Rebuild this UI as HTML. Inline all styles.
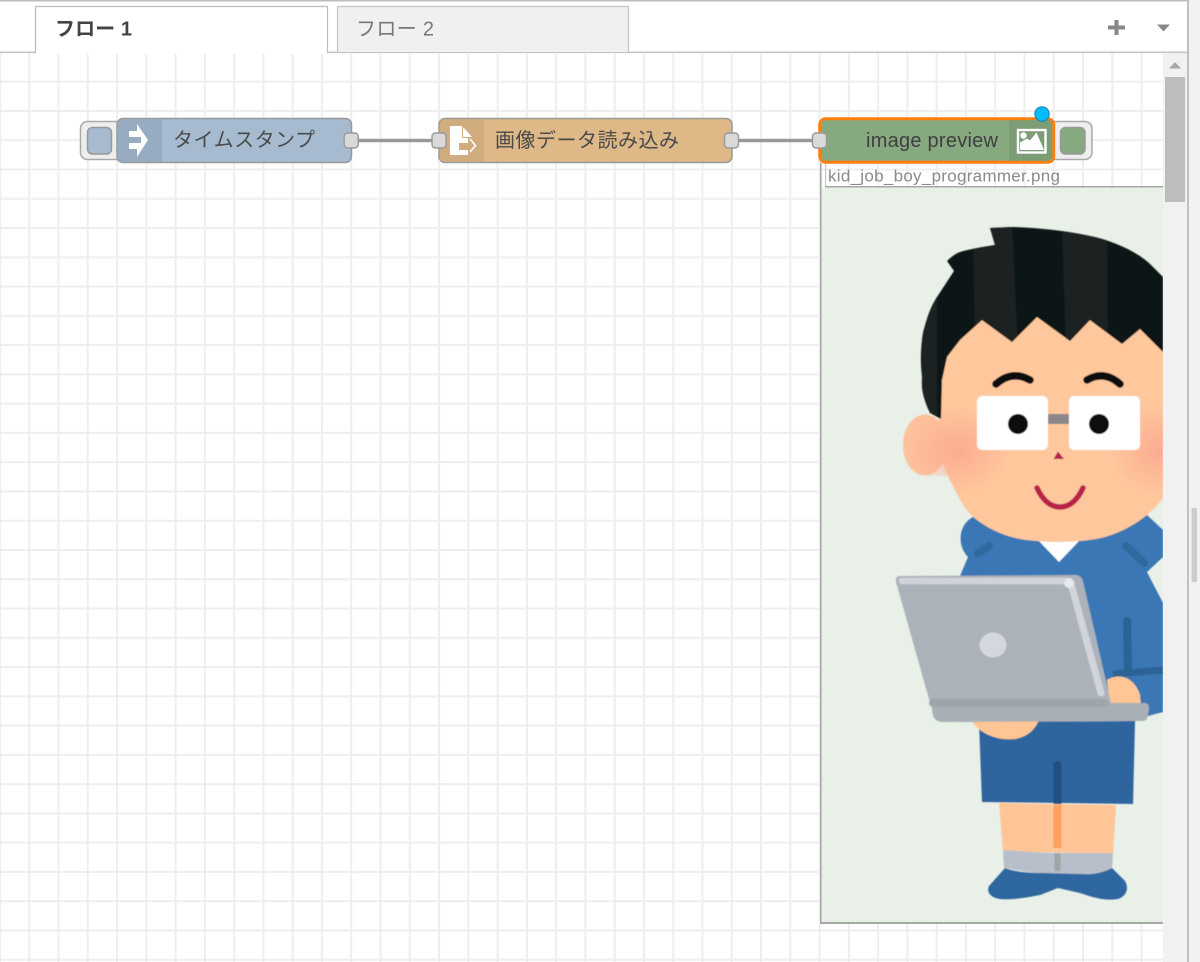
<!DOCTYPE html>
<html lang="ja">
<head>
<meta charset="utf-8">
<title>Node-RED flow</title>
<style>
html,body{margin:0;padding:0;width:1200px;height:962px;overflow:hidden;background:#fff}
svg{display:block}
text{font-family:"Liberation Sans","Noto Sans CJK JP",sans-serif}
</style>
</head>
<body>
<svg width="1200" height="962" viewBox="0 0 1200 962" xmlns="http://www.w3.org/2000/svg">
<defs>
<pattern id="grid" patternUnits="userSpaceOnUse" x="0" y="52.4" width="29.27" height="29.27">
<path d="M0 0V29.27M29.27 0V29.27M0 0H29.27M0 29.27H29.27" stroke="#eeeeee" stroke-width="2" fill="none"/>
</pattern>
<clipPath id="imgclip"><rect x="821" y="188" width="342" height="735"/></clipPath>
<clipPath id="hairclip"><path id="hairp" d="M990,228 L1013,227 C1040,228 1067,231 1090,236 C1110,240 1135,250 1150,264 L1163,277 L1163,352 L1140,329 L1122,344 L1090,320 L1070,341 L1037,317 L1012,342 L982,320 L960,340 L947,357 L942,380 L941,419 L930,413 C924,400 921,390 922,377 C920,360 921,345 923,333 C927,318 930,308 937,297 L954,271 L947,261 C951,257 955,254 960,252 C970,249 983,247 995,245 Z"/></clipPath>
<clipPath id="faceclip"><path d="M903,300 H1163 V520 L1147,515 L973,517 L947,476 H925 C910,476 903,460 903,445 Z"/></clipPath>
<radialGradient id="cheekL" cx="0.5" cy="0.5" r="0.5"><stop offset="0" stop-color="#fda991" stop-opacity="0.95"/><stop offset="1" stop-color="#fda991" stop-opacity="0"/></radialGradient>
<filter id="soft" x="-5%" y="-5%" width="110%" height="110%"><feGaussianBlur stdDeviation="0.5"/></filter>
</defs>

<!-- canvas -->
<rect x="0" y="52" width="1163" height="910" fill="#fff"/>
<rect x="0" y="53" width="1163" height="909" fill="url(#grid)"/>

<!-- tab bar -->
<rect x="0" y="0" width="1188" height="52" fill="#fff"/>
<rect x="0" y="0" width="1188" height="1.5" fill="#bdbdbd"/>
<rect x="0" y="51.5" width="1188" height="1.5" fill="#c4c4c4"/>
<path d="M35.5,53 V6.5 H327.5 V53" fill="#fff" stroke="#bdbdbd" stroke-width="1.2"/>
<rect x="36" y="51" width="291" height="3" fill="#fff"/>
<path d="M337.5,52 V6.5 H628.5 V52" fill="#f0f0f0" stroke="#c4c4c4" stroke-width="1.2"/>
<text x="55" y="35.5" font-size="20" font-weight="700" fill="#444" textLength="77" lengthAdjust="spacing">フロー 1</text>
<text x="356" y="35.5" font-size="20" fill="#777" textLength="78" lengthAdjust="spacing">フロー 2</text>
<path d="M1114.5,20 h4 v5.5 h6.5 v4 h-6.5 v5.5 h-4 v-5.5 h-6.5 v-4 h6.5 z" fill="#888"/>
<path d="M1157,24.5 H1170 L1163.5,31.5 Z" fill="#888"/>

<!-- right scrollbars -->
<rect x="1163" y="53" width="24" height="909" fill="#f1f1f1"/>
<rect x="1187" y="0" width="2" height="962" fill="#c0c0c0"/>
<rect x="1189" y="0" width="11" height="962" fill="#f2f2f2"/>
<path d="M1169,68.5 L1175,62 L1181,68.5 Z" fill="#a6a6a6"/>
<rect x="1165" y="77" width="20" height="125" fill="#bdbdbd"/>
<rect x="1191.5" y="508" width="5.5" height="74" fill="#cdcdcd"/>

<!-- preview image -->
<rect x="825" y="163" width="1.2" height="24" fill="#c8c8c8"/>
<rect x="825" y="186" width="338" height="1.6" fill="#a8a8a8"/>
<rect x="820" y="163" width="1.6" height="761" fill="#a0a8a0"/>
<rect x="820" y="922" width="343" height="2" fill="#a5a8a5"/>
<text x="828" y="181.5" font-size="17" fill="#8a8a8a" textLength="232" lengthAdjust="spacing">kid_job_boy_programmer.png</text>
<rect x="821.5" y="188" width="341.5" height="734" fill="#e8f0e8"/>

<g clip-path="url(#imgclip)">
<g filter="url(#soft)">
<!-- hoodie -->
<path d="M973,517 C958,525 957,546 968,557 L960,576 L960,722 L1148,716 L1163,712 L1163,603 L1147,572 L1163,557 L1163,530 L1147,515 Z" fill="#3b77b5"/>
<path d="M1038,540 L1080,540 L1059,562 Z" fill="#fff"/>
<path d="M978,553 L989,546" stroke="#2f6a9e" stroke-width="8" stroke-linecap="round"/>
<path d="M1126,546 L1144,563" stroke="#2f6a9e" stroke-width="8" stroke-linecap="round"/>
<path d="M1127,621 L1128,668" stroke="#2b6394" stroke-width="8" stroke-linecap="round"/>
<path d="M1113,674 L1163,670" stroke="#2b6394" stroke-width="7"/>

<!-- ear -->
<ellipse cx="925" cy="445" rx="22" ry="30.5" fill="#fdc29c"/>
<!-- face -->
<path d="M941,400 C937,430 938,455 947,473 C955,492 963,507 973,517 C990,531 1012,540 1037,541 C1060,543 1085,542 1105,537 C1122,532 1136,524 1147,515 C1155,508 1160,503 1163,498 L1163,300 L1000,290 L945,320 Z" fill="#fec79c"/>
<g clip-path="url(#faceclip)">
<ellipse cx="958" cy="450" rx="52" ry="44" fill="url(#cheekL)"/>
<ellipse cx="1160" cy="450" rx="50" ry="46" fill="url(#cheekL)"/>
</g>

<!-- hair -->
<use href="#hairp" fill="#111313"/>
<g clip-path="url(#hairclip)">
<rect x="922" y="220" width="15" height="210" fill="#1c2120"/>
<path d="M973,220 H1012 L1018,350 H975 Z" fill="#1d2221"/>
<path d="M1062,225 H1107 L1108,350 H1066 Z" fill="#1d2221"/>
</g>

<!-- brows -->
<path d="M996,384 Q1012,370 1030,380" fill="none" stroke="#0b0710" stroke-width="7.5" stroke-linecap="round"/>
<path d="M1087,380 Q1104,370 1120,384" fill="none" stroke="#0b0710" stroke-width="7.5" stroke-linecap="round"/>
<!-- glasses -->
<rect x="977" y="396" width="71" height="54" rx="5" fill="#fff"/>
<rect x="1069" y="396" width="71" height="54" rx="5" fill="#fff"/>
<rect x="1048" y="414" width="21" height="10" fill="#8b8689"/>
<circle cx="1018" cy="424" r="10" fill="#0b0710"/>
<circle cx="1099" cy="424" r="10" fill="#0b0710"/>
<!-- nose, mouth -->
<path d="M1058,451.5 L1053.5,459 H1064 Z" fill="#b4214a"/>
<path d="M1037,488 Q1046,507 1060,507 Q1074,507 1083,488" fill="none" stroke="#b8204a" stroke-width="5.5" stroke-linecap="round"/>

<!-- shorts -->
<path d="M979,722 L1135,721 L1133,804 L982,802 Z" fill="#2f659f"/>
<path d="M1057.5,765 V806" stroke="#24507e" stroke-width="8" stroke-linecap="round"/>
<!-- hands -->
<path d="M1107,680 C1118,673 1134,676 1140,695 L1141,706 L1110,706 Z" fill="#fec694"/>
<path d="M971,720 C980,735 1000,741 1015,739 C1027,737 1035,730 1039,720 Z" fill="#fec694"/>
<!-- legs -->
<path d="M999,803 L1116,805 L1113,854 L1003,851 Z" fill="#ffc596"/>
<path d="M1057.5,805 V848" stroke="#fd9f5e" stroke-width="8"/>
<!-- socks -->
<path d="M1003,850 L1050,853 L1113,853 L1112,872 L1080,875 L1040,874 L1004,868 Z" fill="#b9bfca"/>
<path d="M1057.5,853 V871" stroke="#9ba6a5" stroke-width="6"/>
<!-- shoes -->
<path d="M1005,868 C1012,871 1025,873 1040,873 L1080,874 C1092,875 1103,873 1112,868 L1125,881 C1129,888 1127,896 1118,899 C1105,901 1095,898 1080,893 L1058,888 L1040,895 C1025,898 1010,900 1000,899 C991,898 986,892 989,886 Z" fill="#2f669f"/>

<!-- laptop -->
<path d="M931,702 L1145,703 Q1149,703 1149,708 L1148,716 Q1147,721 1142,721 L942,722 Q936,722 933,716 Z" fill="#a9b0b5"/>
<path d="M899,576 L1075,575 C1080,575 1082,578 1083,581 L1111,703 L934,704 C931,704 930,702 929,699 L896,582 Q895,577 899,576 Z" fill="#abb2ba"/>
<path d="M933,703 H1105" stroke="#9ea5ac" stroke-width="8" stroke-linecap="round"/>
<path d="M902,581 H1066" stroke="#d0d4d9" stroke-width="6.5" stroke-linecap="round"/>
<path d="M1071,584 L1101,693" stroke="#d1d4da" stroke-width="7" stroke-linecap="round"/>
<circle cx="1069" cy="583" r="5" fill="#e6e8ec"/>
<ellipse cx="993" cy="645" rx="13.5" ry="12.5" fill="#d4d8de"/>
</g>
</g>

<!-- wires -->
<path d="M358,140.5 H432" stroke="#999" stroke-width="3.4"/>
<path d="M739,140.5 H812" stroke="#999" stroke-width="3.4"/>

<!-- Node 1 -->
<rect x="80.5" y="121.5" width="50" height="38" rx="7" fill="#eeeeee" stroke="#a9a9a9" stroke-width="1.5"/>
<rect x="87.5" y="127.5" width="24" height="26.5" rx="5" fill="#a6bbcf" stroke="#999" stroke-width="1.5"/>
<rect x="117" y="118.5" width="234.5" height="44" rx="6" fill="#a6bbcf" stroke="#999" stroke-width="1.5"/>
<path d="M123,119.3 H160.5 V161.7 H123 Q117.8,161.7 117.8,156.5 V124.5 Q117.8,119.3 123,119.3 Z" fill="#97abc1"/>
<rect x="160.5" y="119.3" width="1" height="42.4" fill="#8ea3b8"/>
<path d="M137,124 L148,140 L137,157 V149 H129 V143 H141 V137 H129 V131 H137 Z" fill="#fff"/>
<text x="173" y="146.5" font-size="20" fill="#4a4a4a" textLength="142" lengthAdjust="spacing">タイムスタンプ</text>
<rect x="344.2" y="133" width="14" height="15" rx="3.5" fill="#d9d9d9" stroke="#999" stroke-width="1.4"/>

<!-- Node 2 -->
<rect x="439" y="118.5" width="293" height="44" rx="6" fill="#deb887" stroke="#999" stroke-width="1.5"/>
<path d="M445,119.3 H482.5 V161.7 H445 Q439.8,161.7 439.8,156.5 V124.5 Q439.8,119.3 445,119.3 Z" fill="#d1ac7f"/>
<rect x="482.5" y="119.3" width="1" height="42.4" fill="#c9a478"/>
<path d="M450,126 H462 V138 H468 V143 H459 V150 H468 V155 H450 Z" fill="#fff"/>
<path d="M463,127 L472,137 H463 Z" fill="#fff"/>
<path d="M470,139 L475.5,145.5 L470,152" fill="none" stroke="#fff" stroke-width="1.6"/>
<text x="495" y="147" font-size="20" fill="#4a4a4a" textLength="184" lengthAdjust="spacing">画像データ読み込み</text>
<rect x="432" y="133" width="14" height="15" rx="3.5" fill="#d9d9d9" stroke="#999" stroke-width="1.4"/>
<rect x="724.5" y="133" width="14" height="15" rx="3.5" fill="#d9d9d9" stroke="#999" stroke-width="1.4"/>

<!-- Node 3 -->
<rect x="1042" y="121.5" width="50" height="38" rx="7" fill="#eeeeee" stroke="#a9a9a9" stroke-width="1.5"/>
<rect x="1060.5" y="127.5" width="24.5" height="26.5" rx="5" fill="#87a980" stroke="#999" stroke-width="1.5"/>
<rect x="819.7" y="118.7" width="234" height="43.6" rx="6" fill="#87a980" stroke="#ff7f0e" stroke-width="3"/>
<path d="M1010,120.2 H1048 Q1052.2,120.2 1052.2,124.5 V156.5 Q1052.2,160.8 1048,160.8 H1010 Z" fill="#7c9d76"/>
<rect x="1009.5" y="120.2" width="1" height="40.6" fill="#769870"/>
<rect x="1018" y="130" width="27.5" height="22.5" fill="none" stroke="#fff" stroke-width="2.4"/>
<circle cx="1023.5" cy="135.5" r="3.2" fill="#fff"/>
<path d="M1020,150 V142.5 L1027,138.5 L1030,140.5 L1036.5,132.5 L1044,150 Z" fill="#fff"/>
<text x="866" y="147" font-size="20" fill="#3f3f3f" textLength="132" lengthAdjust="spacing">image preview</text>
<rect x="812.5" y="133" width="14" height="15" rx="3.5" fill="#d9d9d9" stroke="#999" stroke-width="1.4"/>
<circle cx="1042" cy="114" r="7.2" fill="#00bcff" stroke="#1b7fa6" stroke-width="1"/>
</svg>
</body>
</html>
